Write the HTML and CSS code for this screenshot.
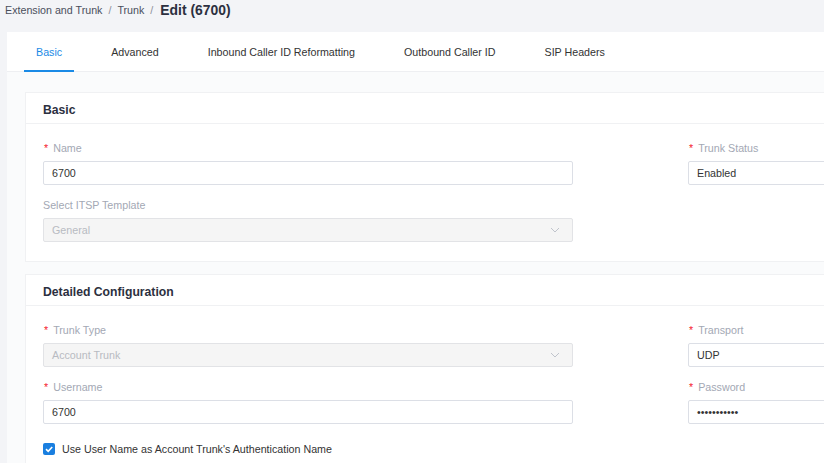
FILE: index.html
```html
<!DOCTYPE html>
<html>
<head>
<meta charset="utf-8">
<link rel="stylesheet" href="styles.css">
</head>
<body>
<div class="breadcrumb">
  <span class="crumb">Extension and Trunk</span><span class="sep">/</span><span class="crumb">Trunk</span><span class="sep">/</span><span class="current">Edit (6700)</span>
</div>
<div class="main">
  <div class="tabs">
    <div class="tab active">Basic</div>
    <div class="tab">Advanced</div>
    <div class="tab">Inbound Caller ID Reformatting</div>
    <div class="tab">Outbound Caller ID</div>
    <div class="tab">SIP Headers</div>
  </div>
  <div class="content">
    <div class="card">
      <div class="card-head">Basic</div>
      <div class="card-body">
        <div class="grid">
          <div class="item">
            <div class="label"><span class="req">*</span>Name</div>
            <div class="input">6700</div>
          </div>
          <div class="item">
            <div class="label"><span class="req">*</span>Trunk Status</div>
            <div class="input">Enabled</div>
          </div>
          <div class="item">
            <div class="label">Select ITSP Template</div>
            <div class="input disabled"><span>General</span>
              <svg class="chev" width="10" height="6" viewBox="0 0 10 6"><path d="M1 1 L5 5 L9 1" fill="none" stroke="#c0c4cc" stroke-width="1"/></svg>
            </div>
          </div>
          <div></div>
        </div>
      </div>
    </div>
    <div class="card">
      <div class="card-head">Detailed Configuration</div>
      <div class="card-body">
        <div class="grid">
          <div class="item">
            <div class="label"><span class="req">*</span>Trunk Type</div>
            <div class="input disabled"><span>Account Trunk</span>
              <svg class="chev" width="10" height="6" viewBox="0 0 10 6"><path d="M1 1 L5 5 L9 1" fill="none" stroke="#c0c4cc" stroke-width="1"/></svg>
            </div>
          </div>
          <div class="item">
            <div class="label"><span class="req">*</span>Transport</div>
            <div class="input">UDP</div>
          </div>
          <div class="item">
            <div class="label"><span class="req">*</span>Username</div>
            <div class="input">6700</div>
          </div>
          <div class="item">
            <div class="label"><span class="req">*</span>Password</div>
            <div class="input pwd">•••••••••••</div>
          </div>
        </div>
        <div class="check-row">
          <span class="checkbox"><svg width="12" height="12" viewBox="0 0 12 12"><path d="M3 6.2 L5.2 8.3 L9.2 4" fill="none" stroke="#fff" stroke-width="1.6"/></svg></span>
          <span class="check-label">Use User Name as Account Trunk's Authentication Name</span>
        </div>
      </div>
    </div>
  </div>
</div>
</body>
</html>
```
FILE: styles.css
```css
html, body {
  margin: 0;
  padding: 0;
  overflow: hidden;
}
body {
  background: #f3f4f7;
  font-family: "Liberation Sans", Arial, sans-serif;
  font-size: 10.7px;
  color: #333;
  width: 1400px;
}
.breadcrumb {
  height: 20px;
  line-height: 20px;
  margin-bottom: 12px;
  padding-left: 5px;
  display: flex;
  align-items: center;
  color: #4a4f5c;
}
.sep {
  margin: 0 6px 0 6px;
  color: #8a8f99;
}
.current {
  font-weight: bold;
  font-size: 13.9px;
  color: #2c3040;
  margin-left: 1px;
}
.main {
  margin-left: 7px;
  background: #fff;
}
.tabs {
  display: flex;
  height: 39px;
  border-bottom: 1px solid #eeeff2;
  padding-left: 17px;
  gap: 25px;
}
.tab {
  box-sizing: border-box;
  height: 40px;
  line-height: 40px;
  padding: 0 12px;
  color: #333;
  border-bottom: 2px solid transparent;
  margin-bottom: -1px;
}
.tab.active {
  color: #1a8ae6;
  border-bottom-color: #1a8ae6;
}
.content {
  background: #fafbfc;
  padding: 20px 18px 20px 18px;
  display: flex;
  flex-direction: column;
  gap: 12px;
}
.card {
  background: #fff;
  border: 1px solid #f0f1f3;
}
.card-head {
  padding: 5px 17px 0;
  height: 25px;
  line-height: 25px;
  font-weight: bold;
  font-size: 12.2px;
  color: #2c3040;
  border-bottom: 1px solid #f0f1f3;
}
.card-body {
  padding: 16px 17px 7px;
}
.grid {
  display: grid;
  grid-template-columns: 530px 530px;
  column-gap: 115px;
}
.item {
  margin-bottom: 12px;
}
.label {
  height: 16px;
  line-height: 16px;
  margin-bottom: 5px;
  color: #a3a8b4;
}
.req {
  color: #f5222d;
  margin-right: 5px;
  margin-left: 1px;
}
.input {
  box-sizing: border-box;
  height: 24px;
  line-height: 22px;
  border: 1px solid #dcdfe6;
  border-radius: 2px;
  padding: 0 8px;
  color: #333;
  background: #fff;
  display: flex;
  align-items: center;
  justify-content: space-between;
}
.input.disabled {
  background: #f5f5f5;
  border-color: #e2e3e6;
  color: #b8bbc2;
}
.chev {
  margin-right: 4px;
}
.pwd {
  color: #333;
}
.check-row {
  display: flex;
  align-items: center;
  height: 28px;
  margin-top: -1px;
}
.checkbox {
  width: 12px;
  height: 12px;
  background: #1a7fe0;
  border-radius: 2px;
  display: flex;
  margin-right: 7px;
}
.check-label {
  color: #333;
}
```
